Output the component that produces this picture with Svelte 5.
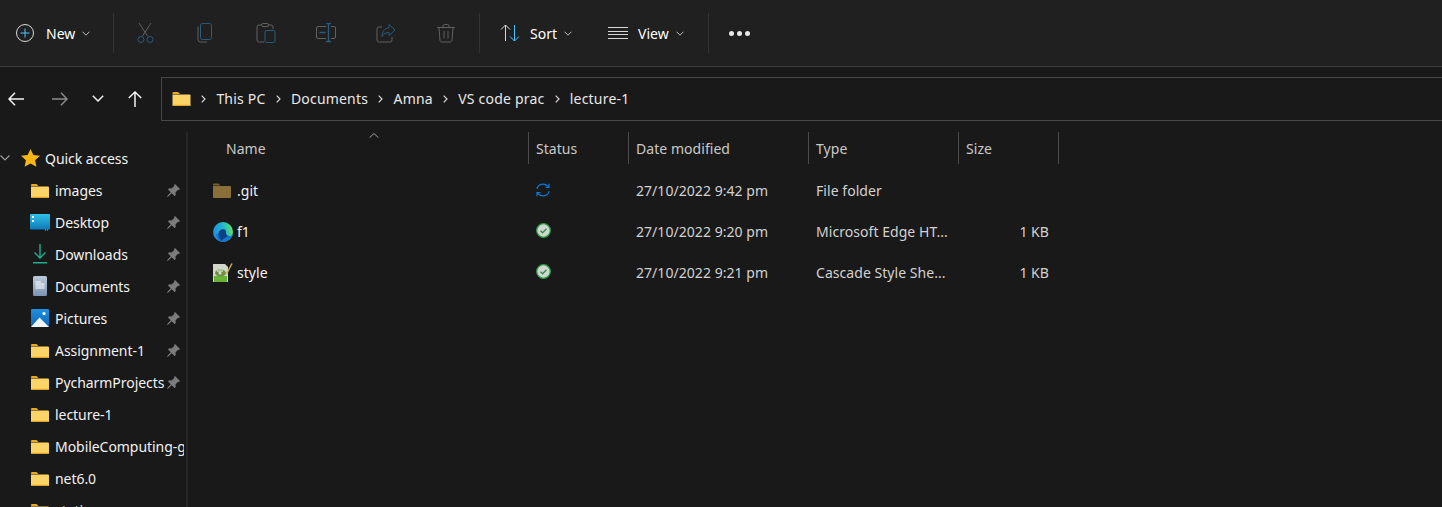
<script>
  const crumbs = ['This PC', 'Documents', 'Amna', 'VS code prac', 'lecture-1'];

  const places = [
    { name: 'images', icon: 'folder', pin: true },
    { name: 'Desktop', icon: 'desktop', pin: true },
    { name: 'Downloads', icon: 'downloads', pin: true },
    { name: 'Documents', icon: 'documents', pin: true },
    { name: 'Pictures', icon: 'pictures', pin: true },
    { name: 'Assignment-1', icon: 'folder', pin: true },
    { name: 'PycharmProjects', icon: 'folder', pin: true },
    { name: 'lecture-1', icon: 'folder', pin: false },
    { name: 'MobileComputing-git', icon: 'folder', pin: false },
    { name: 'net6.0', icon: 'folder', pin: false },
    { name: 'static', icon: 'folder', pin: false },
  ];

  const files = [
    { name: '.git', icon: 'git', status: 'sync', date: '27/10/2022 9:42 pm', type: 'File folder', size: '' },
    { name: 'f1', icon: 'edge', status: 'ok', date: '27/10/2022 9:20 pm', type: 'Microsoft Edge HT...', size: '1 KB' },
    { name: 'style', icon: 'css', status: 'ok', date: '27/10/2022 9:21 pm', type: 'Cascade Style She...', size: '1 KB' },
  ];

  const columns = ['Name', 'Status', 'Date modified', 'Type', 'Size'];
</script>

{#snippet folder(w, h)}
  <svg width={w} height={h} viewBox="0 0 18 15">
    <path d="M0 2a1 1 0 0 1 1-1h4.500l2 2H0z" fill="#e8a825" />
    <path d="M0 3.500h17a1 1 0 0 1 1 1V14a1 1 0 0 1-1 1H1a1 1 0 0 1-1-1z" fill="#fbd467" />
    <rect y="13.800" width="18" height="1.200" fill="#e0a52c" />
  </svg>
{/snippet}

{#snippet chevron()}
  <svg class="caret" width="8" height="5" viewBox="0 0 8 5"><path d="M.5.700 4 4.200 7.500.700" fill="none" stroke="#bdbdbd" /></svg>
{/snippet}

{#snippet placeIcon(kind)}
  {#if kind === 'folder'}
    {@render folder(18, 15)}
  {:else if kind === 'desktop'}
    <svg class="wide" width="20" height="17" viewBox="0 0 20 17">
      <defs><linearGradient id="dk" x1="0" y1="0" x2="0" y2="1"><stop offset="0" stop-color="#2fc0e8" /><stop offset="1" stop-color="#0f78b8" /></linearGradient></defs>
      <rect width="20" height="15.500" rx="1" fill="url(#dk)" />
      <rect x="2" y="2" width="2" height="2" fill="#fff" />
      <rect x="2" y="6" width="2" height="2" fill="#e6f6fb" />
      <rect x="15" y="15.500" width="1" height="1" fill="#9bd" /><rect x="17" y="15.500" width="1" height="1" fill="#9bd" />
    </svg>
  {:else if kind === 'downloads'}
    <svg class="narrow" width="14" height="20" viewBox="1 0 14 20">
      <path d="M8 0v14M2.500 8.500 8 14l5.500-5.500" fill="none" stroke="#1fae8c" stroke-width="1.400" />
      <rect x="1" y="18" width="14" height="1.500" fill="#1fae8c" />
    </svg>
  {:else if kind === 'documents'}
    <svg class="narrow" width="14" height="20" viewBox="0 0 14 20">
      <defs><linearGradient id="dc" x1="0" y1="0" x2="0" y2="1"><stop offset="0" stop-color="#bcc9da" /><stop offset="1" stop-color="#7d93b0" /></linearGradient></defs>
      <rect width="14" height="20" rx="1.500" fill="url(#dc)" />
      <path d="M2.500 6H8M2.500 8H11.500M2.500 10H11.500M2.500 12H11.500" stroke="#fff" />
    </svg>
  {:else if kind === 'pictures'}
    <svg width="18" height="18" viewBox="0 0 18 18">
      <defs><linearGradient id="pc" x1="0" y1="0" x2="0" y2="1"><stop offset="0" stop-color="#1f8fe0" /><stop offset="1" stop-color="#1265b5" /></linearGradient></defs>
      <rect width="18" height="18" rx="1" fill="url(#pc)" />
      <circle cx="13" cy="4.500" r="1.600" fill="#fff" />
      <path d="M0 18 8.500 8.500 18 18z" fill="#eef5fb" />
    </svg>
  {/if}
{/snippet}

{#snippet fileIcon(kind)}
  {#if kind === 'git'}
    <svg width="18" height="15" viewBox="0 0 18 15">
      <path d="M0 1.500a1 1 0 0 1 1-1h4.500l2 2H0z" fill="#7a6230" />
      <path d="M0 3h17a1 1 0 0 1 1 1v10a1 1 0 0 1-1 1H1a1 1 0 0 1-1-1z" fill="#8a7038" />
    </svg>
  {:else if kind === 'edge'}
    <svg width="20" height="20" viewBox="0 0 20 20">
      <defs>
        <linearGradient id="eg1" x1="0" y1="0.500" x2="1" y2="0.300"><stop offset="0" stop-color="#1a8fe0" /><stop offset="0.500" stop-color="#22b4d0" /><stop offset="0.800" stop-color="#3ed08c" /><stop offset="1" stop-color="#7fe05a" /></linearGradient>
      </defs>
      <circle cx="10" cy="10" r="10" fill="url(#eg1)" />
      <path d="M20 11C19.500 16 15 20 10 20 6 20 3 17 3 12L13 11C13 13 15 14 17 14 18.500 14 19.500 12.500 20 11z" fill="#1577cc" />
      <path d="M5.500 12C5.500 8.500 8.500 6.800 11 7.300c1.500.3 2.200 1.700 2 3.200-.2 2 .8 3 2 3.800-3 1.500-6 3-6.500 4.500C6.500 17 5.500 14.500 5.500 12z" fill="#0b3f86" />
    </svg>
  {:else if kind === 'css'}
    <svg width="20" height="20" viewBox="0 0 20 20">
      <path d="M0 1h12l3 3v15H0z" fill="#d2d7cb" />
      <path d="M1 13h13v6H1z" fill="#69b436" />
      <ellipse cx="7.500" cy="10" rx="5.500" ry="3.500" fill="#6f8f45" />
      <rect x="4" y="6" width="6" height="3" fill="#b4c59a" />
      <circle cx="7" cy="10" r="1.500" fill="#d8e0c8" />
      <path d="M19 .500 13.500 11" stroke="#d9b24a" stroke-width="1.400" />
    </svg>
  {/if}
{/snippet}

<div class="explorer">
  <header class="toolbar">
    <button class="tool new">
      <svg width="18" height="18" viewBox="0 0 18 18">
        <circle cx="9" cy="9" r="8.500" fill="none" stroke="#d8d8d8" />
        <path d="M9 4.500v9M4.500 9h9" stroke="#4cc2ff" />
      </svg>
      <span>New</span>
      {@render chevron()}
    </button>
    <i class="sep first"></i>
    <div class="actions">
      <button class="act" aria-label="Cut">
        <svg width="20" height="20" viewBox="0 0 20 20" fill="none">
          <path d="M3 0 11.500 13M15 0 6.500 13" stroke="#606060" />
          <circle cx="5" cy="16.500" r="3" stroke="#2a5c7c" /><circle cx="14" cy="16.500" r="3" stroke="#2a5c7c" />
        </svg>
      </button>
      <button class="act" aria-label="Copy">
        <svg width="20" height="20" viewBox="0 0 20 20" fill="none">
          <path d="M2 3.500v13a2.500 2.500 0 0 0 2.500 2.500H11" stroke="#606060" />
          <rect x="4.500" y=".500" width="11" height="16" rx="2" stroke="#2a5c7c" />
        </svg>
      </button>
      <button class="act" aria-label="Paste">
        <svg width="20" height="20" viewBox="0 0 20 20" fill="none">
          <path d="M8 19H3a2 2 0 0 1-2-2V4a2 2 0 0 1 2-2h2M13 2h2a2 2 0 0 1 2 2v2" stroke="#606060" />
          <rect x="5.500" y=".500" width="7" height="3" rx="1.500" stroke="#606060" />
          <rect x="9" y="7.500" width="10" height="12" rx="1.500" stroke="#2a5c7c" />
        </svg>
      </button>
      <button class="act" aria-label="Rename">
        <svg width="20" height="20" viewBox="0 0 20 20" fill="none">
          <path d="M10 3.500H2a1.500 1.500 0 0 0-1.500 1.500v9A1.500 1.500 0 0 0 2 15.500h8M15 3.500h3a1.500 1.500 0 0 1 1.500 1.500v9a1.500 1.500 0 0 1-1.500 1.500h-3" stroke="#606060" />
          <path d="M10 .500h5M10 18.500h5M12.500 .500v18M3.500 9.500h6" stroke="#2a5c7c" stroke-width="1.300" />
        </svg>
      </button>
      <button class="act" aria-label="Share">
        <svg width="20" height="20" viewBox="0 0 20 20" fill="none">
          <path d="M6 4H3a2 2 0 0 0-2 2v11a2 2 0 0 0 2 2h11a2 2 0 0 0 2-2v-3" stroke="#606060" />
          <path d="M13 1.500 19 7l-6 5.500V9.500c-3 0-5.500 1-7 4 0-5 3-8.500 7-8.500z" stroke="#2a5c7c" />
        </svg>
      </button>
      <button class="act" aria-label="Delete">
        <svg width="20" height="20" viewBox="0 0 20 20" fill="none" stroke="#606060">
          <path d="M1 4.500h18M7 4.500V3a1.500 1.500 0 0 1 1.500-1.500h3A1.500 1.500 0 0 1 13 3v1.500M3 4.500l1 13a2 2 0 0 0 2 1.500h8a2 2 0 0 0 2-1.500l1-13M8 8v7.500M12 8v7.500" />
        </svg>
      </button>
    </div>
    <i class="sep"></i>
    <button class="tool sort">
      <svg width="20" height="18" viewBox="0 0 20 18" fill="none">
        <path d="M5.500 17V1M1 5.500 5.500 1 10 5.500" stroke="#d8d8d8" />
        <path d="M14.500 1v16M10 12.500l4.500 4.500 4.500-4.500" stroke="#4cc2ff" />
      </svg>
      <span>Sort</span>
      {@render chevron()}
    </button>
    <button class="tool view">
      <svg width="20" height="12" viewBox="0 0 20 12"><path d="M0 .500h20M0 4.500h20M0 7.500h20M0 11.500h20" stroke="#d8d8d8" /></svg>
      <span>View</span>
      {@render chevron()}
    </button>
    <i class="sep last"></i>
    <button class="more" aria-label="More"><b></b><b></b><b></b></button>
  </header>

  <div class="navrow">
    <div class="navbtns">
      <svg class="back" width="16" height="14" viewBox="0 0 16 14" fill="none"><path d="M16 7H1M7 .800 1 7l6 6.200" stroke="#f4f4f4" stroke-width="1.500" /></svg>
      <svg class="fwd" width="16" height="14" viewBox="0 0 16 14" fill="none"><path d="M0 7h15M9 .800 15 7l-6 6.200" stroke="#8a8a8a" stroke-width="1.500" /></svg>
      <svg class="hist" width="12" height="7" viewBox="0 0 12 7" fill="none"><path d="M.800.800 6 6l5.200-5.200" stroke="#eee" stroke-width="1.500" /></svg>
      <svg class="up" width="14" height="16" viewBox="0 0 14 16" fill="none"><path d="M7 16V1M.800 7 7 1l6.200 6" stroke="#f4f4f4" stroke-width="1.500" /></svg>
    </div>
    <div class="path">
      <div class="pathico">{@render folder(19, 15)}</div>
      {#each crumbs as c}
        <svg class="gt" width="5" height="8" viewBox="0 0 5 8" fill="none"><path d="M.700.700 4 4 .700 7.300" stroke="#d8d8d8" stroke-width="1.200" /></svg>
        <span>{c}</span>
      {/each}
    </div>
  </div>

  <div class="body">
    <aside class="side">
      <div class="place quick">
        <svg class="tw" width="10" height="6" viewBox="0 0 10 6" fill="none"><path d="M.500.500 5 5 9.500.500" stroke="#9a9a9a" stroke-width="1.200" /></svg>
        <svg width="19" height="18" viewBox="0 0 19 18"><path d="M9.500 0l2.900 6 6.600.8-4.900 4.500 1.300 6.500-5.900-3.300-5.900 3.300 1.300-6.500L0 6.800 6.600 6z" fill="#f6b712" /></svg>
        <span>Quick access</span>
      </div>
      {#each places as p}
        <div class="place">
          <div class="ico">{@render placeIcon(p.icon)}</div>
          <span class="label">{p.name}</span>
          {#if p.pin}
            <svg class="pin" width="13" height="13" viewBox="0 0 13 13"><path d="M8 0l5 5-1 1-1-.300L8.500 8.500 8.700 11 7.500 12 4.700 9.300.800 13 0 12.200 3.700 8.300 1 5.500l1-1.200 2.500.200L7.300 2 7 1z" fill="#7b7b7b" /></svg>
          {/if}
        </div>
      {/each}
    </aside>

    <main class="list">
      <div class="row head">
        {#each columns as col, i}
          <div class="cell" class:first={i === 0}>{col}</div>
        {/each}
        <svg class="sortmark" width="10" height="5" viewBox="0 0 10 5" fill="none"><path d="M.500 4.700 5 .500l4.500 4.200" stroke="#a0a0a0" /></svg>
      </div>
      {#each files as f}
        <div class="row file">
          <div class="cell namecell">
            <div class="fico">{@render fileIcon(f.icon)}</div>
            <span>{f.name}</span>
          </div>
          <div class="cell status">
            {#if f.status === 'sync'}
              <svg width="14" height="14" viewBox="0 0 14 14" fill="none" stroke="#0f78d4" stroke-width="1.200">
                <path d="M1 6a6 5.500 0 0 1 10.500-3L13 4.500M13 .800v3.700H9.500" />
                <path d="M13 8a6 5.500 0 0 1-10.500 3L1 9.500M1 13.200V9.500h3.500" />
              </svg>
            {:else}
              <svg width="15" height="15" viewBox="0 0 15 15" fill="none">
                <circle cx="7.500" cy="7.500" r="6.800" fill="#cfd8cf" stroke="#2f9a45" stroke-width="1.300" />
                <path d="M4.500 7.700 6.600 9.800 10.500 5.800" stroke="#3a8a4a" stroke-width="1.300" />
              </svg>
            {/if}
          </div>
          <div class="cell dim">{f.date}</div>
          <div class="cell dim">{f.type}</div>
          <div class="cell dim size">{f.size}</div>
        </div>
      {/each}
    </main>
  </div>
</div>

<style>
  :global(body) {
    background: #191919;
  }

  .explorer {
    width: 1442px;
    height: 507px;
    overflow: hidden;
    display: flex;
    flex-direction: column;
    background: #191919;
    color: #fff;
    font-family: "Noto Sans", "Open Sans", sans-serif;
    font-size: 14px;
    letter-spacing: 0.05px;
  }

  button {
    background: none;
    border: none;
    padding: 0;
    color: inherit;
    font: inherit;
    letter-spacing: inherit;
    display: flex;
    align-items: center;
  }

  .toolbar {
    height: 67px;
    flex: none;
    box-sizing: border-box;
    background: #202020;
    border-bottom: 1px solid #3a3a3a;
    display: flex;
    align-items: center;
    padding-left: 16px;
  }

  .tool span {
    margin-left: 12px;
  }

  .tool .caret {
    margin-left: 7px;
  }

  .new {
    width: 97px;
  }

  .sep {
    width: 1px;
    height: 40px;
    background: #333;
    flex: none;
  }

  .actions {
    display: flex;
    margin-left: 2px;
  }

  .act {
    width: 60px;
    height: 40px;
    justify-content: center;
  }

  .actions + .sep {
    margin-left: 3px;
  }

  .sort {
    margin-left: 20px;
    width: 108px;
  }

  .sort span {
    margin-left: 10px;
  }

  .view {
    width: 100px;
  }

  .view span {
    margin-left: 10px;
  }

  .more {
    margin-left: 20px;
    gap: 3px;
  }

  .more b {
    width: 5px;
    height: 5px;
    border-radius: 50%;
    background: #e8e8e8;
  }

  .navrow {
    height: 65px;
    flex: none;
    display: flex;
    align-items: center;
    box-sizing: border-box;
    padding-bottom: 2px;
  }

  .navbtns {
    width: 161px;
    flex: none;
    display: flex;
    align-items: center;
    padding-left: 8px;
    box-sizing: border-box;
  }

  .fwd {
    margin-left: 28px;
  }

  .hist {
    margin-left: 24px;
  }

  .up {
    margin-left: 24px;
  }

  .path {
    width: 1300px;
    flex: none;
    height: 44px;
    box-sizing: border-box;
    border: 1px solid #474747;
    display: flex;
    align-items: center;
    padding-left: 10px;
    color: #e8e8e8;
    letter-spacing: 0.2px;
  }

  .pathico {
    display: flex;
  }

  .path .gt {
    margin: 0 10.2px;
  }

  .body {
    flex: 1;
    display: flex;
    min-height: 0;
  }

  .side {
    width: 188px;
    flex: none;
    box-sizing: border-box;
    border-right: 2px solid #262626;
    overflow: hidden;
    padding-top: 10px;
    letter-spacing: -0.05px;
  }

  .place {
    height: 32px;
    display: flex;
    align-items: center;
    padding-left: 31px;
    position: relative;
    color: #f2f2f2;
  }

  .place.quick {
    padding-left: 0;
  }

  .quick .tw {
    margin-right: 11px;
  }

  .quick span {
    margin-left: 5px;
  }

  .ico {
    width: 24px;
    flex: none;
    display: flex;
    align-items: center;
  }

  .ico .wide {
    margin-left: -1px;
  }

  .ico .narrow {
    margin-left: 2px;
  }

  .label {
    width: 129px;
    flex: none;
    white-space: nowrap;
    overflow: hidden;
  }

  .pin {
    position: absolute;
    left: 167px;
    top: 10px;
  }

  .list {
    flex: 1;
    min-width: 0;
    position: relative;
  }

  .row {
    display: grid;
    grid-template-columns: 340px 100px 180px 150px 101px;
    align-items: center;
  }

  .head {
    height: 32px;
    color: #c9c9c9;
    margin-bottom: 6px;
    position: relative;
  }

  .head .cell {
    height: 32px;
    line-height: 34px;
    box-sizing: border-box;
    border-left: 1px solid #4c4c4c;
    padding-left: 7px;
  }

  .head .cell.first {
    border-left: none;
    padding-left: 38px;
  }

  .head .cell:last-of-type {
    border-right: 1px solid #4c4c4c;
  }

  .sortmark {
    position: absolute;
    left: 181px;
    top: 1px;
  }

  .file {
    height: 41px;
  }

  .file .cell {
    padding-left: 8px;
    display: flex;
    align-items: center;
    white-space: nowrap;
  }

  .file .namecell {
    padding-left: 25px;
    color: #f2f2f2;
  }

  .file .status {
    padding-bottom: 2px;
  }

  .fico {
    width: 24px;
    flex: none;
    display: flex;
    align-items: center;
  }

  .dim {
    color: #d2d2d2;
  }

  .size {
    justify-content: flex-end;
    padding-right: 10px;
  }
</style>
